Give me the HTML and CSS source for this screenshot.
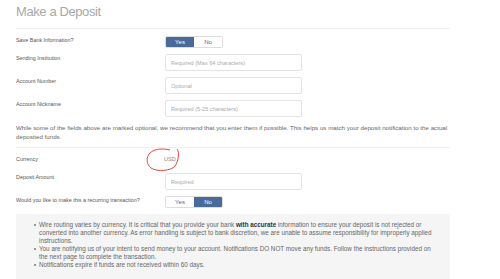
FILE: index.html
```html
<!DOCTYPE html>
<html lang="en">
<head>
<meta charset="UTF-8" />
<meta name="viewport" content="width=device-width, initial-scale=1" />
<title>Make a Deposit</title>
<link rel="stylesheet" href="styles.css">
</head>
<body>
  <div class="page">
    <h1>Make a Deposit</h1>

    <div class="form">
      <div class="row">
        <label>Save Bank Information?</label>
        <div class="toggle"><span class="on">Yes</span><span>No</span></div>
      </div>
      <div class="row">
        <label for="institution">Sending Institution</label>
        <input type="text" id="institution" placeholder="Required (Max 64 characters)" />
      </div>
      <div class="row">
        <label for="accountNumber">Account Number</label>
        <input type="text" id="accountNumber" placeholder="Optional" />
      </div>
      <div class="row">
        <label for="nickname">Account Nickname</label>
        <input type="text" id="nickname" placeholder="Required (5-25 characters)" />
      </div>
    </div>

    <p class="note">While some of the fields above are marked optional, we recommend that you enter them if possible. This helps us match your deposit notification to the actual deposited funds.</p>

    <div class="form second">
      <div class="row currency">
        <label>Currency</label>
        <div class="value">USD
          <!-- hand drawn mark around the currency -->
          <svg class="circle" width="34" height="24" viewBox="0 0 34 24">
            <path d="M31 1 C 34 5, 32 14, 29 18 C 25 23, 11 24, 5 20 C 0 16, 0 9, 4 5 C 8 1, 16 0, 24 2" fill="none" stroke="#e0302a" stroke-width="0.9" />
          </svg>
        </div>
      </div>
      <div class="row">
        <label for="amount">Deposit Amount</label>
        <input type="text" id="amount" placeholder="Required" />
      </div>
      <div class="row">
        <label>Would you like to make this a recurring transaction?</label>
        <div class="toggle"><span>Yes</span><span class="on">No</span></div>
      </div>
    </div>

    <div class="info">
      <ul>
        <li>Wire routing varies by currency. It is critical that you provide your bank <strong>with accurate</strong> information to ensure your deposit is not rejected or converted into another currency. As error handling is subject to bank discretion, we are unable to assume responsibility for improperly applied instructions.</li>
        <li>You are notifying us of your intent to send money to your account. Notifications DO NOT move any funds. Follow the instructions provided on the next page to complete the transaction.</li>
        <li>Notifications expire if funds are not received within 60 days.</li>
      </ul>
    </div>
  </div>
</body>
</html>
```

FILE: styles.css
```css
body {
  font-family: 'Liberation Sans', Arial, sans-serif;
  background: #ffffff;
  margin: 0;
  color: #555;
}
.page {
  width: 434px;
  margin-left: 16px;
}
h1 {
  margin: 0;
  padding-top: 2px;
  font-size: 13px;
  line-height: 20px;
  letter-spacing: -0.4px;
  font-weight: normal;
  color: #a8a8a8;
  height: 26px;
  border-bottom: 1px solid #eee;
}
.form {
  display: flex;
  flex-direction: column;
  gap: 6px;
  padding-top: 7px;
}
.row {
  display: flex;
  align-items: flex-start;
}
.row label {
  width: 149px;
  flex-shrink: 0;
  font-size: 5.4px;
  line-height: 9px;
  color: #555;
}
.toggle {
  display: flex;
  height: 12px;
  border: 1px solid #ddd;
  border-radius: 2px;
  box-sizing: border-box;
  overflow: hidden;
}
.toggle span {
  width: 28px;
  font-size: 6px;
  line-height: 10px;
  text-align: center;
  color: #4a6a9c;
  background: #fff;
}
.toggle span.on {
  background: #4a6a9c;
  color: #fff;
}
input[type=text] {
  width: 137px;
  height: 17px;
  box-sizing: border-box;
  margin: 0;
  padding: 0 5px;
  font-family: 'Liberation Sans', Arial, sans-serif;
  font-size: 5.6px;
  border: 1px solid #e3e3e3;
  border-radius: 2px;
  color: #555;
}
input[type=text]::placeholder {
  color: #aaa;
}
.note {
  margin: 6px 0 0;
  padding-bottom: 6px;
  font-size: 6.2px;
  line-height: 9px;
  color: #666;
  border-bottom: 1px solid #eee;
}
.second {
  padding-top: 7px;
}
.second .currency {
  margin-bottom: 3px;
}
.value {
  position: relative;
  font-size: 5.6px;
  line-height: 9px;
  color: #888;
  margin-left: -1px;
}
.circle {
  position: absolute;
  left: -18px;
  top: -7px;
}
.info {
  margin-top: 6px;
  background: #f5f5f5;
  padding: 7px 12px 10px 0;
  height: 49px;
}
.info ul {
  margin: 0;
  padding-left: 23px;
  list-style: none;
  font-size: 6.3px;
  line-height: 8px;
  color: #666;
}
.info li {
  position: relative;
}
.info li::before {
  content: "";
  position: absolute;
  left: -5px;
  top: 3px;
  width: 2px;
  height: 2px;
  border-radius: 50%;
  background: #777;
}
.info strong {
  color: #333;
}
```
